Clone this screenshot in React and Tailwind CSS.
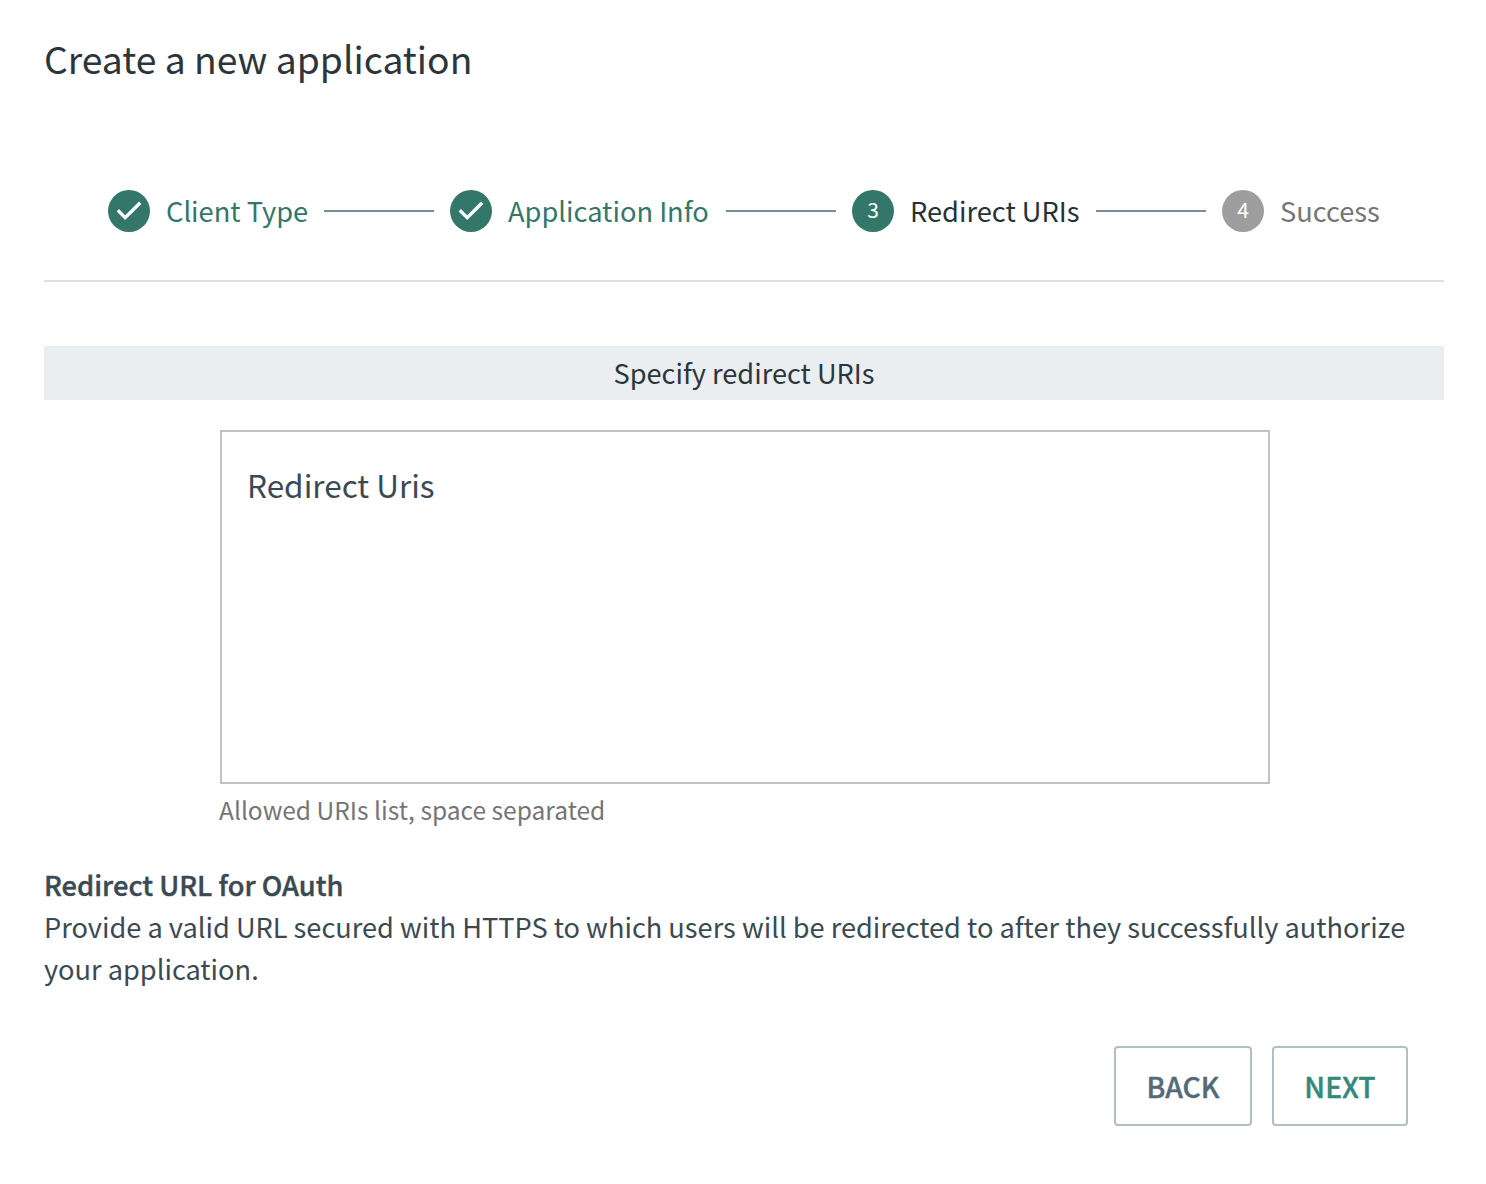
import React from "react";

const steps = [
  { label: "Client Type", state: "done", width: "w-[142px]" },
  { label: "Application Info", state: "done", width: "w-[202px]" },
  { label: "Redirect URIs", state: "active", width: "w-[170px]" },
  { label: "Success", state: "pending", width: "w-[100px]" },
];

const circleColor = { done: "bg-[#33776a]", active: "bg-[#33776a]", pending: "bg-[#9e9e9e]" };
const labelColor = { done: "text-[#33776a]", active: "text-[#263238]", pending: "text-[#757575]" };

function Step({ step, number }) {
  return (
    <div className="flex items-center">
      <div className={`flex size-[42px] items-center justify-center rounded-full text-[21px] leading-none text-white ${circleColor[step.state]}`}>
        {step.state === "done" ? (
          <svg viewBox="0 0 42 42" className="size-[42px]" fill="none" stroke="currentColor" strokeWidth="3.4">
            <path d="M9.8 20.2 17.2 27.6 32.2 12.8" />
          </svg>
        ) : (
          <span className="-mt-[3px]">{number}</span>
        )}
      </div>
      <span className={`-mt-[3px] ml-4 whitespace-nowrap text-[27.25px] leading-[42px] ${step.width} ${labelColor[step.state]}`}>{step.label}</span>
    </div>
  );
}

export default function App() {
  return (
    <main className="h-[1184px] w-[1486px] overflow-hidden bg-white px-11 font-['Noto_Sans_CJK_SC',sans-serif] text-[#3b4a52]">
      <h1 className="pt-7 text-[37.25px] leading-[60px] text-[#2b363b]">Create a new application</h1>
      <div className="mt-[102px] flex h-[42px] w-[1400px] items-center pl-16">
        {steps.map((step, i) => (
          <React.Fragment key={step.label}>
            {i > 0 && <div className="mx-4 h-0.5 w-[110px] bg-[#7b8b98]" />}
            <Step step={step} number={i + 1} />
          </React.Fragment>
        ))}
      </div>
      <div className="mt-12 h-0.5 w-[1400px] bg-[#dfdfdf]" />
      <h2 className="mt-16 h-[54px] w-[1400px] bg-[#eaeef1] text-center text-[27.2px] leading-[53px] text-[#2b363b]">Specify redirect URIs</h2>
      <textarea
        placeholder="Redirect Uris"
        className="ml-44 mt-[30px] block h-[354px] w-[1050px] resize-none border-2 border-[#c2c2c2] px-[25px] py-7 text-[31.5px] leading-[48px] outline-none placeholder:text-[#3b4a52]"
      />
      <p className="ml-[175px] mt-[6px] text-[24.55px] leading-[40px] text-[#757575]">Allowed URIs list, space separated</p>
      <section className="mt-[33px] w-[1400px] text-[27.2px] leading-[42px]">
        <h3 className="text-[27.3px] font-medium [-webkit-text-stroke:0.4px]">Redirect URL for OAuth</h3>
        <p>Provide a valid URL secured with HTTPS to which users will be redirected to after they successfully authorize your application.</p>
      </section>
      <div className="mt-[57px] flex w-[1364px] justify-end gap-5 text-[28.3px] font-medium [-webkit-text-stroke:0.4px]">
        <button className="h-20 w-[138px] rounded border-2 border-[#b0bec5] text-[#566a76]">BACK</button>
        <button className="h-20 w-[136px] rounded border-2 border-[#b0bec5] text-[#35897a]">NEXT</button>
      </div>
    </main>
  );
}
